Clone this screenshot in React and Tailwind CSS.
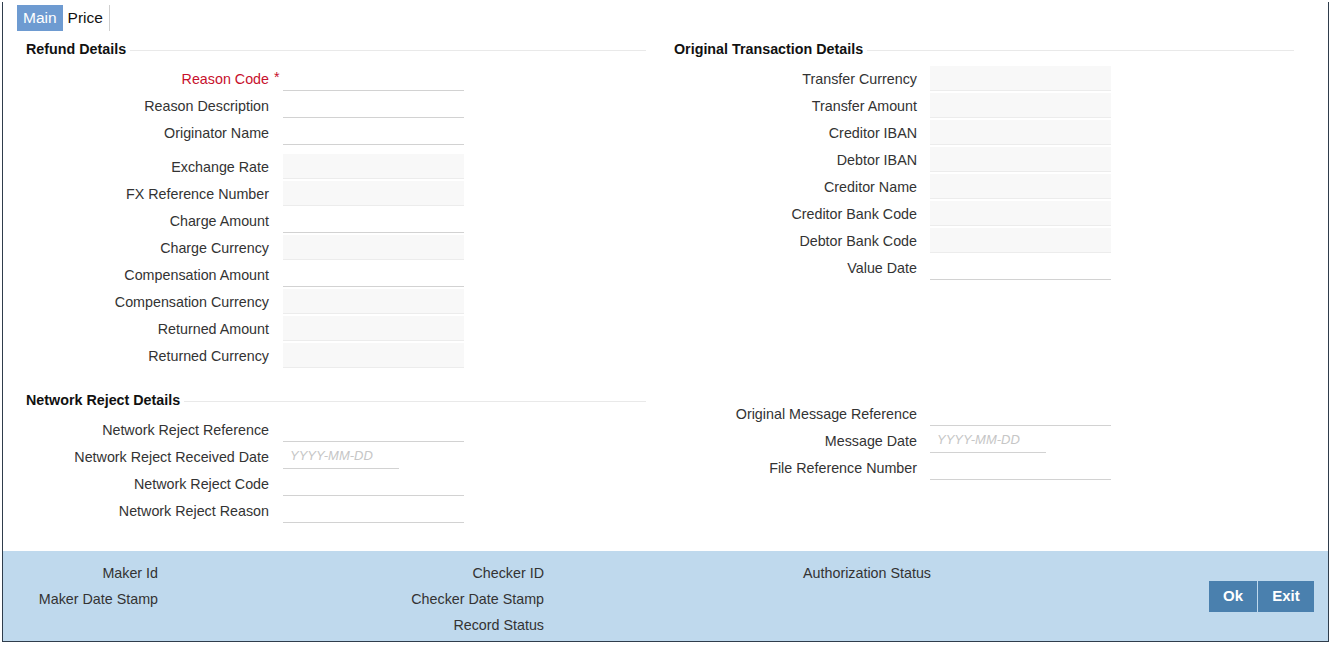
import React from "react";

const FONT = "font-['Liberation_Sans',Arial,sans-serif]";

function SectionHeader({ title }) {
  return (
    <div className="flex items-center h-[20px] gap-[4px]">
      <span className="text-[14.3px] font-bold text-[#111]">{title}</span>
      <div className="flex-1 h-px bg-[#e9e9e9] mt-[1px]"></div>
    </div>
  );
}

function Field({ label, kind = "text", required, gap = "ml-[14px]" }) {
  let box = "";
  if (kind === "ro") box = "w-[181px] bg-[#f8f8f8] border-b border-[#ececec]";
  if (kind === "text") box = "w-[181px] bg-white border-b border-[#d2d2d2]";
  if (kind === "date") box = "w-[116px] bg-white border-b border-[#d2d2d2]";

  return (
    <div className="flex h-[27px]">
      <div className="w-[243px] flex items-center justify-end">
        <span className={"relative " + (required ? "text-[#c7102c]" : "text-[#333]")}>
          {label}
          {required && (
            <span className="absolute left-[calc(100%+5px)] top-[-2px] text-[#c7102c]">*</span>
          )}
        </span>
      </div>
      <div className={gap + " h-[25px] flex items-center " + box}>
        {kind === "date" && (
          <span className="pl-[7px] text-[13px] italic text-[#c6c6c6]">YYYY-MM-DD</span>
        )}
      </div>
    </div>
  );
}

export default function App() {
  return (
    <div className={"w-[1331px] h-[645px] bg-white text-[14.3px] " + FONT}>
      <div className="ml-[2px] mt-[2px] w-[1327px] h-[640px] border-x border-b border-[#2f3d4c] flex flex-col">

        {/* Tabs */}
        <div className="flex pl-[14px] pt-[3px]">
          <div className="h-[26px] px-[6px] flex items-center bg-[#6e9bd1] text-white text-[15.5px]">
            Main
          </div>
          <div className="h-[26px] pl-[5px] pr-[6px] flex items-center border-r border-[#cfcfcf] text-[#111] text-[15.5px]">
            Price
          </div>
        </div>

        {/* Form body */}
        <div className="flex-1 pl-[23px] pt-[9px]">

          <div className="flex gap-[28px]">
            {/* Refund Details */}
            <div className="w-[620px]">
              <SectionHeader title="Refund Details" />
              <div className="mt-[6px]">
                <Field label="Reason Code" required />
                <Field label="Reason Description" />
                <Field label="Originator Name" />
                <div className="h-[7px]"></div>
                <Field label="Exchange Rate" kind="ro" />
                <Field label="FX Reference Number" kind="ro" />
                <Field label="Charge Amount" />
                <Field label="Charge Currency" kind="ro" />
                <Field label="Compensation Amount" />
                <Field label="Compensation Currency" kind="ro" />
                <Field label="Returned Amount" kind="ro" />
                <Field label="Returned Currency" kind="ro" />
              </div>
            </div>

            {/* Original Transaction Details */}
            <div className="w-[620px]">
              <SectionHeader title="Original Transaction Details" />
              <div className="mt-[6px]">
                <Field label="Transfer Currency" kind="ro" gap="ml-[13px]" />
                <Field label="Transfer Amount" kind="ro" gap="ml-[13px]" />
                <Field label="Creditor IBAN" kind="ro" gap="ml-[13px]" />
                <Field label="Debtor IBAN" kind="ro" gap="ml-[13px]" />
                <Field label="Creditor Name" kind="ro" gap="ml-[13px]" />
                <Field label="Creditor Bank Code" kind="ro" gap="ml-[13px]" />
                <Field label="Debtor Bank Code" kind="ro" gap="ml-[13px]" />
                <Field label="Value Date" gap="ml-[13px]" />
              </div>
            </div>
          </div>

          <div className="flex gap-[28px] mt-[21px]">
            {/* Network Reject Details */}
            <div className="w-[620px]">
              <SectionHeader title="Network Reject Details" />
              <div className="mt-[6px]">
                <Field label="Network Reject Reference" />
                <Field label="Network Reject Received Date" kind="date" />
                <Field label="Network Reject Code" />
                <Field label="Network Reject Reason" />
              </div>
            </div>

            <div className="w-[620px] pt-[10px]">
              <Field label="Original Message Reference" gap="ml-[13px]" />
              <Field label="Message Date" kind="date" gap="ml-[13px]" />
              <Field label="File Reference Number" gap="ml-[13px]" />
            </div>
          </div>
        </div>

        {/* Footer */}
        <div className="h-[90px] bg-[#bfd9ed] flex text-[#333]">
          <div className="flex pt-[9px]">
            <div className="w-[155px] text-right">
              <div className="h-[26px] leading-[26px]">Maker Id</div>
              <div className="h-[26px] leading-[26px]">Maker Date Stamp</div>
            </div>
            <div className="w-[386px] text-right">
              <div className="h-[26px] leading-[26px]">Checker ID</div>
              <div className="h-[26px] leading-[26px]">Checker Date Stamp</div>
              <div className="h-[26px] leading-[26px]">Record Status</div>
            </div>
            <div className="w-[387px] text-right">
              <div className="h-[26px] leading-[26px]">Authorization Status</div>
            </div>
          </div>

          <div className="flex-1 flex items-center justify-end pr-[14px]">
            <div className="flex gap-px">
              <button className="h-[31px] w-[48px] bg-[#4a80ae] text-white text-[15px] font-bold">
                Ok
              </button>
              <button className="h-[31px] w-[56px] bg-[#4a80ae] text-white text-[15px] font-bold">
                Exit
              </button>
            </div>
          </div>
        </div>

      </div>
    </div>
  );
}
